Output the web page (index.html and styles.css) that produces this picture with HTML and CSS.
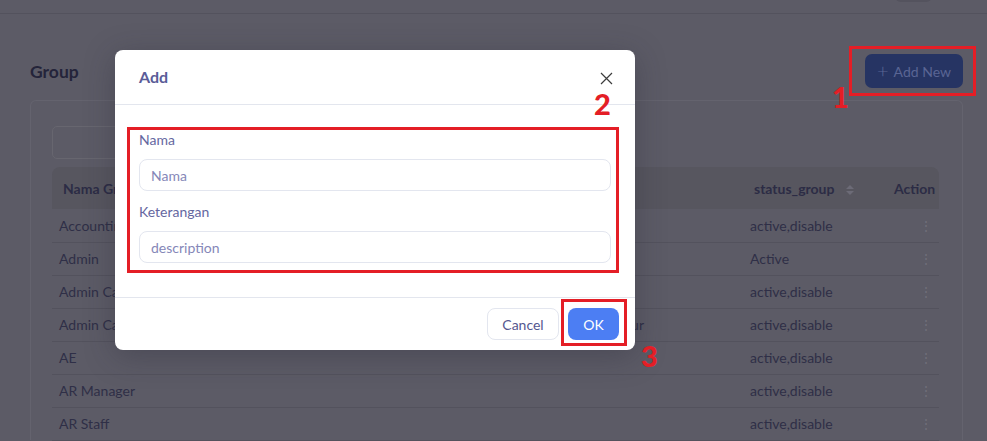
FILE: index.html
```html
<!DOCTYPE html>
<html lang="id">
<head>
<meta charset="utf-8">
<title>Group</title>
<link rel="stylesheet" href="styles.css">
</head>
<body>
<div class="page">
  <header class="topbar"><span class="top-btn"></span></header>
  <main class="content">
    <div class="title-row">
      <h1 class="title">Group</h1>
      <button class="add-btn"><span class="plus">+</span>Add New</button>
    </div>
    <section class="card">
      <div class="search"></div>
      <table class="table">
        <thead>
          <tr>
            <th class="c-name">Nama Group</th>
            <th class="c-desc">Keterangan</th>
            <th class="c-status">status_group <span class="sort"><i class="up"></i><i class="down"></i></span></th>
            <th class="c-act">Action</th>
          </tr>
        </thead>
        <tbody>
          <tr><td>Accounting</td><td></td><td>active,disable</td><td class="c-act">⋮</td></tr>
          <tr><td>Admin</td><td></td><td>Active</td><td class="c-act">⋮</td></tr>
          <tr><td>Admin Cabang</td><td></td><td>active,disable</td><td class="c-act">⋮</td></tr>
          <tr><td>Admin Cabang Timur</td><td class="desc-txt">Timur</td><td>active,disable</td><td class="c-act">⋮</td></tr>
          <tr><td>AE</td><td></td><td>active,disable</td><td class="c-act">⋮</td></tr>
          <tr><td>AR Manager</td><td></td><td>active,disable</td><td class="c-act">⋮</td></tr>
          <tr><td>AR Staff</td><td></td><td>active,disable</td><td class="c-act">⋮</td></tr>
        </tbody>
      </table>
    </section>
  </main>
</div>

<div class="mark mark-add"></div>
<div class="num num-1">1</div>

<div class="modal">
  <div class="modal-head">
    <span class="modal-title">Add</span>
    <svg class="close" width="13" height="13" viewBox="0 0 13 13"><path d="M1 1L12 12M12 1L1 12" stroke="#3c3c3c" stroke-width="1.2" fill="none"/></svg>
  </div>
  <div class="modal-body">
    <div class="form-box">
      <label class="lbl">Nama</label>
      <div class="input">Nama</div>
      <label class="lbl lbl-2">Keterangan</label>
      <div class="input">description</div>
    </div>
  </div>
  <div class="modal-foot">
    <button class="btn btn-cancel">Cancel</button>
    <button class="btn btn-ok">OK</button>
  </div>
</div>

<div class="num num-2">2</div>
<div class="mark mark-ok"></div>
<div class="num num-3">3</div>
</body>
</html>
```
FILE: styles.css
```css
* { box-sizing: border-box; }
html, body { margin: 0; padding: 0; }
body {
  width: 987px;
  height: 441px;
  overflow: hidden;
  background: #5c5b66;
  font-family: Lato, "Open Sans", sans-serif;
  position: relative;
}
.page { width: 987px; height: 441px; overflow: hidden; }
.topbar {
  height: 14px;
  border-bottom: 1px solid #53525d;
  position: relative;
}
.top-btn {
  position: absolute;
  left: 895px;
  top: -10px;
  width: 37px;
  height: 12px;
  border-radius: 6px;
  background: #54535e;
}
.content { padding: 0 24px 0 30px; }
.title-row {
  display: flex;
  align-items: center;
  justify-content: space-between;
  height: 86px;
  padding-top: 28px;
}
.title {
  margin: 0;
  font-size: 17.5px;
  font-weight: 700;
  color: #24243a;
}
.add-btn {
  width: 98px;
  height: 34px;
  border: 0;
  border-radius: 7px;
  background: #263463;
  color: #5a6594;
  font-family: Lato, sans-serif;
  font-size: 14px;
  display: flex;
  align-items: center;
  justify-content: center;
  gap: 5px;
  padding: 0;
}
.plus { font-size: 20px; font-weight: 300; line-height: 1; margin-top: -2px; }
.card {
  border: 1px solid #64636e;
  border-bottom: 0;
  border-radius: 6px 6px 0 0;
  height: 340px;
  padding: 25px 22px 0 21px;
}
.search {
  width: 300px;
  height: 33px;
  border: 1px solid #67666f;
  border-radius: 5px;
}
.table {
  margin-top: 8px;
  width: 887px;
  table-layout: fixed;
  border-collapse: collapse;
  font-size: 14px;
  color: #2f2f47;
}
.table th {
  height: 42px;
  background: #57565f;
  text-align: left;
  font-weight: 700;
  color: #2c2c45;
  padding: 0 11px;
  white-space: nowrap;
  overflow: hidden;
}
.table th:first-child { border-radius: 8px 0 0 0; }
.table th:last-child { border-radius: 0 8px 0 0; }
.table td {
  height: 33px;
  border-bottom: 1px solid #53525d;
  padding: 0 7px;
  white-space: nowrap;
  overflow: hidden;
}
.c-name { width: 300px; }
.c-desc { width: 391px; color: transparent !important; }
.c-status { width: 140px; }
.table th.c-act { text-align: right; padding-right: 5px; }
.table td.c-act { text-align: right; color: #6f6e79; padding-right: 6px; }
.table td.desc-txt { padding-left: 256px; }
.sort {
  display: inline-flex;
  flex-direction: column;
  gap: 2px;
  margin-left: 8px;
  vertical-align: middle;
}
.sort i {
  width: 0; height: 0;
  border-left: 4px solid transparent;
  border-right: 4px solid transparent;
}
.sort .up { border-bottom: 4px solid #6c6b77; }
.sort .down { border-top: 4px solid #6c6b77; }

/* modal */
.modal {
  position: absolute;
  left: 115px;
  top: 50px;
  width: 520px;
  height: 300px;
  background: #fff;
  border-radius: 8px;
  box-shadow: 0 6px 30px rgba(40, 40, 55, 0.35);
  display: flex;
  flex-direction: column;
}
.modal-head {
  height: 55px;
  border-bottom: 1px solid #e3e6ee;
  display: flex;
  align-items: center;
  justify-content: space-between;
  padding: 0 22px 0 24px;
}
.modal-title {
  font-size: 16px;
  font-weight: 700;
  color: #5a5c98;
  margin-top: -1px;
}
.close { margin-top: 2px; }
.modal-body { padding: 22px 16px 24px 12px; }
.form-box {
  border: 3px solid #e41e26;
  padding: 0 5px 7px 9px;
}
.lbl {
  display: block;
  height: 20px;
  line-height: 20px;
  font-size: 14px;
  color: #65679f;
  margin-bottom: 9px;
}
.lbl-2 { margin-top: 11px; }
.input {
  height: 32px;
  border: 1px solid #e3e6ef;
  border-radius: 8px;
  padding: 0 11px;
  display: flex;
  align-items: center;
  font-size: 14px;
  color: #8587b8;
}
.modal-foot {
  border-top: 1px solid #e3e6ee;
  flex: 1;
  display: flex;
  justify-content: flex-end;
  align-items: flex-start;
  gap: 9px;
  padding: 10px 16px 0 0;
}
.btn {
  height: 32px;
  border-radius: 8px;
  font-family: Lato, sans-serif;
  font-size: 14px;
  padding: 0;
}
.btn-cancel {
  width: 72px;
  background: #fff;
  border: 1px solid #e3e6ef;
  color: #55578f;
}
.btn-ok {
  width: 51px;
  background: #4c7ef3;
  border: 0;
  color: #fff;
}

/* annotations */
.mark {
  position: absolute;
  border: 3px solid #e41e26;
}
.mark-add { left: 849px; top: 46px; width: 127px; height: 50px; }
.mark-ok { left: 561px; top: 299px; width: 66px; height: 47px; }
.num {
  position: absolute;
  color: #e41e26;
  font-family: Lato, sans-serif;
  font-weight: 900;
  font-size: 29px;
  line-height: 1;
}
.num-1 { left: 832px; top: 82px; }
.num-2 { left: 594px; top: 89px; }
.num-3 { left: 641px; top: 341px; }
```
